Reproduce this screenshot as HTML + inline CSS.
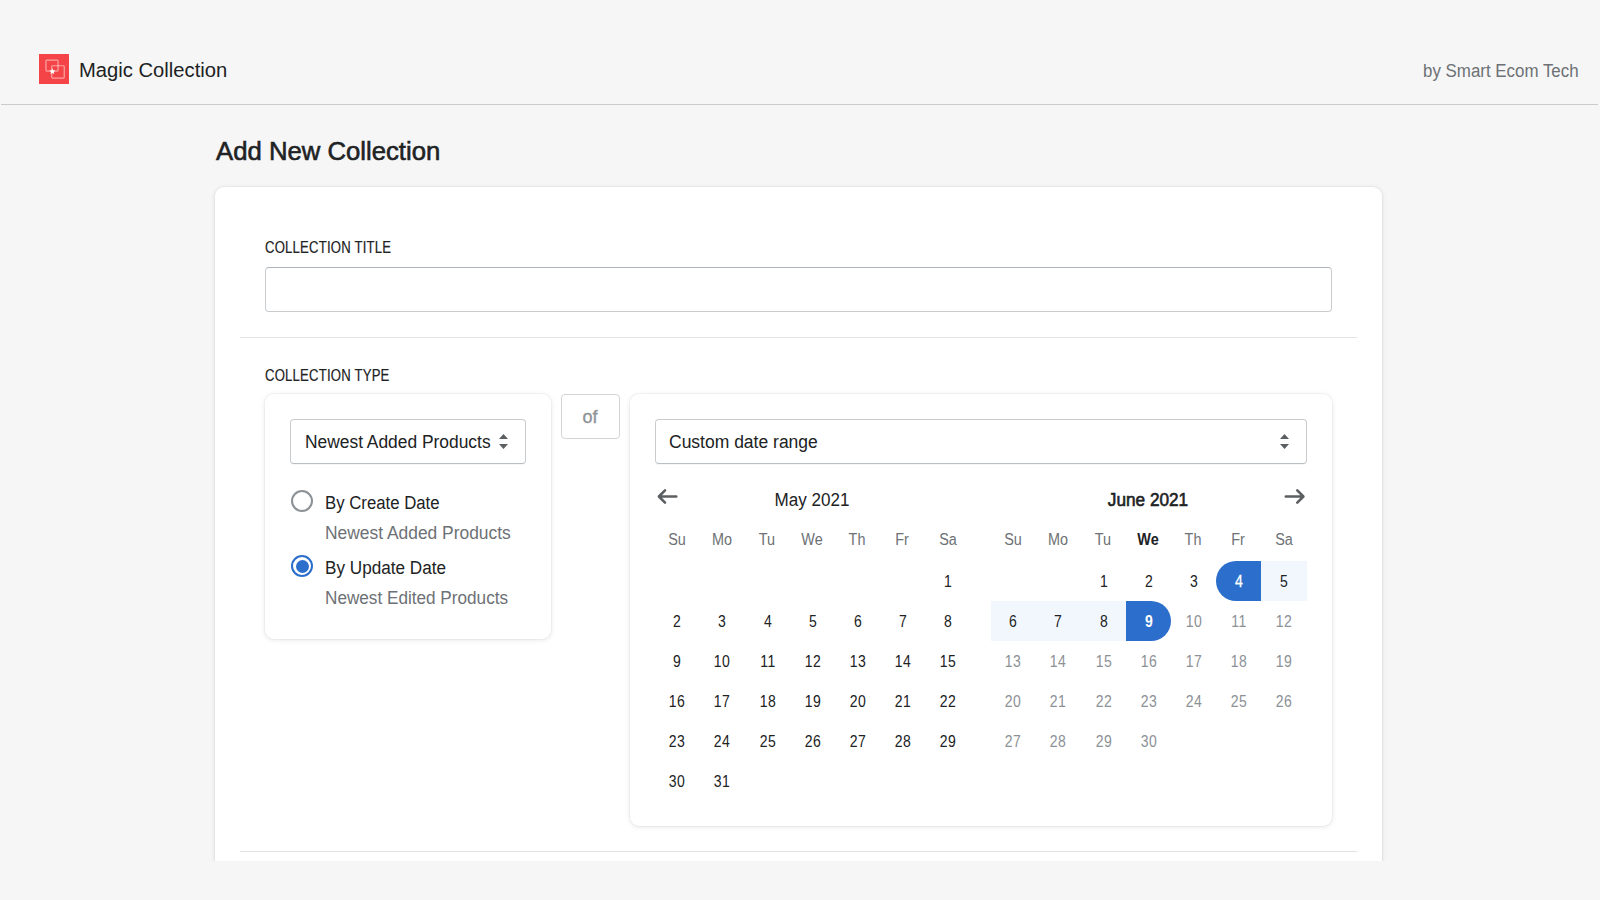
<!DOCTYPE html>
<html><head><meta charset="utf-8"><title>Magic Collection</title>
<style>
html,body{margin:0;padding:0;}
body{width:1600px;height:900px;background:#f6f6f7;position:relative;overflow:hidden;font-family:"Liberation Sans",sans-serif;}
.t{position:absolute;white-space:nowrap;}
.abs{position:absolute;}
.logo{position:absolute;left:39px;top:54px;width:30px;height:30px;background:#f54447;}
.logo svg{display:block}
.hline{position:absolute;left:1px;top:104px;width:1597px;height:1px;background:#c9cccf;}
.card{position:absolute;left:215px;top:187px;width:1167px;height:700px;background:#fff;border-radius:9px;
  box-shadow:0 0 0 1px rgba(63,63,68,.035),0 1px 5px 0 rgba(63,63,68,.13);}
.clip{position:absolute;left:0;top:861px;width:1600px;height:39px;background:#f6f6f7;}
.field{position:absolute;box-sizing:border-box;border:1px solid #c9cccf;border-top-color:#aeb4b9;border-radius:4px;background:#fff;}
.sel{position:absolute;box-sizing:border-box;border:1px solid #c9cccf;border-bottom-color:#babfc3;border-radius:4px;background:#fff;box-shadow:0 1px 0 rgba(22,29,37,.04);}
.divider{position:absolute;left:240px;width:1117px;height:1px;background:#e1e3e5;}
.sub{position:absolute;background:#fff;border-radius:9px;box-shadow:0 0 0 1px rgba(63,63,68,.035),0 1px 5px 0 rgba(63,63,68,.13);}
.ofbox{position:absolute;left:561px;top:394px;width:59px;height:45px;box-sizing:border-box;border:1px solid #d2d5d8;border-radius:4px;background:#fff;}
.radio{position:absolute;width:22px;height:22px;box-sizing:border-box;border:2px solid #8c9196;border-radius:50%;}
.radio.on{border-color:#2c6ecb;}
.radio.on span{position:absolute;left:2.5px;top:2.5px;width:13px;height:13px;border-radius:50%;background:#2c6ecb;}
</style></head><body>
<div class="logo"><svg width="30" height="30" viewBox="0 0 30 30"><rect x="6.95" y="6.05" width="12.1" height="11.1" rx="0.8" fill="none" stroke="rgba(255,255,255,0.5)" stroke-width="1.2"/><rect x="12.75" y="11.75" width="12.5" height="12.3" rx="0.8" fill="none" stroke="rgba(255,255,255,0.5)" stroke-width="1.2"/><path d="M13.4 14.4 L14.3 16.3 L16.4 16.5 L14.8 17.9 L15.3 20 L13.4 18.9 L11.5 20 L12 17.9 L10.4 16.5 L12.5 16.3 Z" fill="#fff"/></svg></div>
<div class="t" style="left:78.70px;top:59.77px;font-size:20px;line-height:20px;color:#202223;font-weight:normal;letter-spacing:0px;transform:scaleX(1.01);transform-origin:0 0;">Magic Collection</div>
<div class="t" style="left:1423.40px;top:61.66px;font-size:18px;line-height:18px;color:#6d7175;font-weight:normal;letter-spacing:0px;transform:scaleX(0.939);transform-origin:0 0;">by Smart Ecom Tech</div>
<div class="hline"></div>
<div class="t" style="left:215.50px;top:137.57px;font-size:26.5px;line-height:26.5px;color:#202223;font-weight:normal;letter-spacing:0px;transform:scaleX(0.97);transform-origin:0 0;-webkit-text-stroke:0.6px #202223;">Add New Collection</div>
<div class="card"></div>
<div class="t" style="left:264.60px;top:240.03px;font-size:15.8px;line-height:15.8px;color:#202223;font-weight:normal;letter-spacing:0.25px;transform:scaleX(0.83);transform-origin:0 0;-webkit-text-stroke:0.2px #202223;">COLLECTION TITLE</div>
<div class="field" style="left:265px;top:267px;width:1067px;height:45px"></div>
<div class="divider" style="top:337px"></div>
<div class="t" style="left:264.60px;top:367.63px;font-size:15.8px;line-height:15.8px;color:#202223;font-weight:normal;letter-spacing:0.25px;transform:scaleX(0.83);transform-origin:0 0;-webkit-text-stroke:0.2px #202223;">COLLECTION TYPE</div>
<div class="sub" style="left:265px;top:394px;width:286px;height:245px"></div>
<div class="sel" style="left:290px;top:419px;width:236px;height:45px"></div>
<div class="t" style="left:305.00px;top:432.56px;font-size:18px;line-height:18px;color:#202223;font-weight:normal;letter-spacing:0px;transform:scaleX(0.966);transform-origin:0 0;">Newest Added Products</div>
<svg class="abs" style="left:490px;top:430px" width="30" height="24" viewBox="490 430 30 24"><path d="M499 439 L503.5 434 L508 439 Z M499 444 L508 444 L503.5 449 Z" fill="#5c5f62"/></svg>
<div class="radio" style="left:291px;top:490px"></div>
<div class="radio on" style="left:291px;top:555px"><span></span></div>
<div class="t" style="left:325.00px;top:493.56px;font-size:18px;line-height:18px;color:#202223;font-weight:normal;letter-spacing:0px;transform:scaleX(0.931);transform-origin:0 0;">By Create Date</div>
<div class="t" style="left:325.00px;top:524.46px;font-size:18px;line-height:18px;color:#6d7175;font-weight:normal;letter-spacing:0px;transform:scaleX(0.967);transform-origin:0 0;">Newest Added Products</div>
<div class="t" style="left:325.00px;top:558.56px;font-size:18px;line-height:18px;color:#202223;font-weight:normal;letter-spacing:0px;transform:scaleX(0.952);transform-origin:0 0;">By Update Date</div>
<div class="t" style="left:325.00px;top:588.96px;font-size:18px;line-height:18px;color:#6d7175;font-weight:normal;letter-spacing:0px;transform:scaleX(0.953);transform-origin:0 0;">Newest Edited Products</div>
<div class="ofbox"></div>
<div class="t" style="left:582.50px;top:407.66px;font-size:18px;line-height:18px;color:#8c9196;font-weight:normal;letter-spacing:0px;-webkit-text-stroke:0.3px #8c9196;">of</div>
<div class="sub" style="left:630px;top:394px;width:702px;height:432px"></div>
<div class="sel" style="left:655px;top:419px;width:652px;height:45px"></div>
<div class="t" style="left:669.30px;top:433.06px;font-size:18px;line-height:18px;color:#202223;font-weight:normal;letter-spacing:0px;transform:scaleX(0.972);transform-origin:0 0;">Custom date range</div>
<svg class="abs" style="left:1270px;top:430px" width="30" height="24" viewBox="1270 430 30 24"><path d="M1280 439 L1284.5 434 L1289 439 Z M1280 444 L1289 444 L1284.5 449 Z" fill="#5c5f62"/></svg>
<svg class="abs" style="left:650px;top:482px" width="34" height="30" viewBox="650 482 34 30"><path d="M676.3 496.5 H659.5 M665 490.4 L658.9 496.5 L665 502.6" fill="none" stroke="#5c5f62" stroke-width="2.6" stroke-linecap="round" stroke-linejoin="round"/></svg>
<svg class="abs" style="left:1280px;top:482px" width="34" height="30" viewBox="1280 482 34 30"><path d="M1285.8 496.5 H1303 M1297.3 490.4 L1303.4 496.5 L1297.3 502.6" fill="none" stroke="#5c5f62" stroke-width="2.6" stroke-linecap="round" stroke-linejoin="round"/></svg>
<div class="t" style="left:712.30px;width:200px;text-align:center;top:490.66px;font-size:18px;line-height:18px;color:#202223;font-weight:normal;letter-spacing:0px;transform:scaleX(0.947);transform-origin:50% 0;">May 2021</div>
<div class="t" style="left:1048.20px;width:200px;text-align:center;top:490.66px;font-size:18px;line-height:18px;color:#202223;font-weight:normal;letter-spacing:0px;transform:scaleX(0.955);transform-origin:50% 0;-webkit-text-stroke:0.6px #202223;">June 2021</div>
<div class="t" style="left:576.77px;width:200px;text-align:center;top:531.66px;font-size:16px;line-height:16px;color:#6d7175;font-weight:normal;letter-spacing:0px;transform:scaleX(0.9);transform-origin:50% 0;">Su</div>
<div class="t" style="left:621.91px;width:200px;text-align:center;top:531.66px;font-size:16px;line-height:16px;color:#6d7175;font-weight:normal;letter-spacing:0px;transform:scaleX(0.9);transform-origin:50% 0;">Mo</div>
<div class="t" style="left:667.06px;width:200px;text-align:center;top:531.66px;font-size:16px;line-height:16px;color:#6d7175;font-weight:normal;letter-spacing:0px;transform:scaleX(0.9);transform-origin:50% 0;">Tu</div>
<div class="t" style="left:712.20px;width:200px;text-align:center;top:531.66px;font-size:16px;line-height:16px;color:#6d7175;font-weight:normal;letter-spacing:0px;transform:scaleX(0.9);transform-origin:50% 0;">We</div>
<div class="t" style="left:757.34px;width:200px;text-align:center;top:531.66px;font-size:16px;line-height:16px;color:#6d7175;font-weight:normal;letter-spacing:0px;transform:scaleX(0.9);transform-origin:50% 0;">Th</div>
<div class="t" style="left:802.49px;width:200px;text-align:center;top:531.66px;font-size:16px;line-height:16px;color:#6d7175;font-weight:normal;letter-spacing:0px;transform:scaleX(0.9);transform-origin:50% 0;">Fr</div>
<div class="t" style="left:847.63px;width:200px;text-align:center;top:531.66px;font-size:16px;line-height:16px;color:#6d7175;font-weight:normal;letter-spacing:0px;transform:scaleX(0.9);transform-origin:50% 0;">Sa</div>
<div class="t" style="left:912.77px;width:200px;text-align:center;top:531.66px;font-size:16px;line-height:16px;color:#6d7175;font-weight:normal;letter-spacing:0px;transform:scaleX(0.9);transform-origin:50% 0;">Su</div>
<div class="t" style="left:957.91px;width:200px;text-align:center;top:531.66px;font-size:16px;line-height:16px;color:#6d7175;font-weight:normal;letter-spacing:0px;transform:scaleX(0.9);transform-origin:50% 0;">Mo</div>
<div class="t" style="left:1003.06px;width:200px;text-align:center;top:531.66px;font-size:16px;line-height:16px;color:#6d7175;font-weight:normal;letter-spacing:0px;transform:scaleX(0.9);transform-origin:50% 0;">Tu</div>
<div class="t" style="left:1048.20px;width:200px;text-align:center;top:531.66px;font-size:16px;line-height:16px;color:#202223;font-weight:bold;letter-spacing:0px;transform:scaleX(0.9);transform-origin:50% 0;">We</div>
<div class="t" style="left:1093.34px;width:200px;text-align:center;top:531.66px;font-size:16px;line-height:16px;color:#6d7175;font-weight:normal;letter-spacing:0px;transform:scaleX(0.9);transform-origin:50% 0;">Th</div>
<div class="t" style="left:1138.49px;width:200px;text-align:center;top:531.66px;font-size:16px;line-height:16px;color:#6d7175;font-weight:normal;letter-spacing:0px;transform:scaleX(0.9);transform-origin:50% 0;">Fr</div>
<div class="t" style="left:1183.63px;width:200px;text-align:center;top:531.66px;font-size:16px;line-height:16px;color:#6d7175;font-weight:normal;letter-spacing:0px;transform:scaleX(0.9);transform-origin:50% 0;">Sa</div>
<div class="t" style="left:848.13px;width:200px;text-align:center;top:572.97px;font-size:16.1px;line-height:16.1px;color:#202223;font-weight:normal;letter-spacing:0.5px;transform:scaleX(0.87);transform-origin:50% 0;">1</div>
<div class="t" style="left:577.27px;width:200px;text-align:center;top:612.97px;font-size:16.1px;line-height:16.1px;color:#202223;font-weight:normal;letter-spacing:0.5px;transform:scaleX(0.87);transform-origin:50% 0;">2</div>
<div class="t" style="left:622.41px;width:200px;text-align:center;top:612.97px;font-size:16.1px;line-height:16.1px;color:#202223;font-weight:normal;letter-spacing:0.5px;transform:scaleX(0.87);transform-origin:50% 0;">3</div>
<div class="t" style="left:667.56px;width:200px;text-align:center;top:612.97px;font-size:16.1px;line-height:16.1px;color:#202223;font-weight:normal;letter-spacing:0.5px;transform:scaleX(0.87);transform-origin:50% 0;">4</div>
<div class="t" style="left:712.70px;width:200px;text-align:center;top:612.97px;font-size:16.1px;line-height:16.1px;color:#202223;font-weight:normal;letter-spacing:0.5px;transform:scaleX(0.87);transform-origin:50% 0;">5</div>
<div class="t" style="left:757.84px;width:200px;text-align:center;top:612.97px;font-size:16.1px;line-height:16.1px;color:#202223;font-weight:normal;letter-spacing:0.5px;transform:scaleX(0.87);transform-origin:50% 0;">6</div>
<div class="t" style="left:802.99px;width:200px;text-align:center;top:612.97px;font-size:16.1px;line-height:16.1px;color:#202223;font-weight:normal;letter-spacing:0.5px;transform:scaleX(0.87);transform-origin:50% 0;">7</div>
<div class="t" style="left:848.13px;width:200px;text-align:center;top:612.97px;font-size:16.1px;line-height:16.1px;color:#202223;font-weight:normal;letter-spacing:0.5px;transform:scaleX(0.87);transform-origin:50% 0;">8</div>
<div class="t" style="left:577.27px;width:200px;text-align:center;top:652.97px;font-size:16.1px;line-height:16.1px;color:#202223;font-weight:normal;letter-spacing:0.5px;transform:scaleX(0.87);transform-origin:50% 0;">9</div>
<div class="t" style="left:622.41px;width:200px;text-align:center;top:652.97px;font-size:16.1px;line-height:16.1px;color:#202223;font-weight:normal;letter-spacing:0.5px;transform:scaleX(0.87);transform-origin:50% 0;">10</div>
<div class="t" style="left:667.56px;width:200px;text-align:center;top:652.97px;font-size:16.1px;line-height:16.1px;color:#202223;font-weight:normal;letter-spacing:0.5px;transform:scaleX(0.87);transform-origin:50% 0;">11</div>
<div class="t" style="left:712.70px;width:200px;text-align:center;top:652.97px;font-size:16.1px;line-height:16.1px;color:#202223;font-weight:normal;letter-spacing:0.5px;transform:scaleX(0.87);transform-origin:50% 0;">12</div>
<div class="t" style="left:757.84px;width:200px;text-align:center;top:652.97px;font-size:16.1px;line-height:16.1px;color:#202223;font-weight:normal;letter-spacing:0.5px;transform:scaleX(0.87);transform-origin:50% 0;">13</div>
<div class="t" style="left:802.99px;width:200px;text-align:center;top:652.97px;font-size:16.1px;line-height:16.1px;color:#202223;font-weight:normal;letter-spacing:0.5px;transform:scaleX(0.87);transform-origin:50% 0;">14</div>
<div class="t" style="left:848.13px;width:200px;text-align:center;top:652.97px;font-size:16.1px;line-height:16.1px;color:#202223;font-weight:normal;letter-spacing:0.5px;transform:scaleX(0.87);transform-origin:50% 0;">15</div>
<div class="t" style="left:577.27px;width:200px;text-align:center;top:692.97px;font-size:16.1px;line-height:16.1px;color:#202223;font-weight:normal;letter-spacing:0.5px;transform:scaleX(0.87);transform-origin:50% 0;">16</div>
<div class="t" style="left:622.41px;width:200px;text-align:center;top:692.97px;font-size:16.1px;line-height:16.1px;color:#202223;font-weight:normal;letter-spacing:0.5px;transform:scaleX(0.87);transform-origin:50% 0;">17</div>
<div class="t" style="left:667.56px;width:200px;text-align:center;top:692.97px;font-size:16.1px;line-height:16.1px;color:#202223;font-weight:normal;letter-spacing:0.5px;transform:scaleX(0.87);transform-origin:50% 0;">18</div>
<div class="t" style="left:712.70px;width:200px;text-align:center;top:692.97px;font-size:16.1px;line-height:16.1px;color:#202223;font-weight:normal;letter-spacing:0.5px;transform:scaleX(0.87);transform-origin:50% 0;">19</div>
<div class="t" style="left:757.84px;width:200px;text-align:center;top:692.97px;font-size:16.1px;line-height:16.1px;color:#202223;font-weight:normal;letter-spacing:0.5px;transform:scaleX(0.87);transform-origin:50% 0;">20</div>
<div class="t" style="left:802.99px;width:200px;text-align:center;top:692.97px;font-size:16.1px;line-height:16.1px;color:#202223;font-weight:normal;letter-spacing:0.5px;transform:scaleX(0.87);transform-origin:50% 0;">21</div>
<div class="t" style="left:848.13px;width:200px;text-align:center;top:692.97px;font-size:16.1px;line-height:16.1px;color:#202223;font-weight:normal;letter-spacing:0.5px;transform:scaleX(0.87);transform-origin:50% 0;">22</div>
<div class="t" style="left:577.27px;width:200px;text-align:center;top:732.97px;font-size:16.1px;line-height:16.1px;color:#202223;font-weight:normal;letter-spacing:0.5px;transform:scaleX(0.87);transform-origin:50% 0;">23</div>
<div class="t" style="left:622.41px;width:200px;text-align:center;top:732.97px;font-size:16.1px;line-height:16.1px;color:#202223;font-weight:normal;letter-spacing:0.5px;transform:scaleX(0.87);transform-origin:50% 0;">24</div>
<div class="t" style="left:667.56px;width:200px;text-align:center;top:732.97px;font-size:16.1px;line-height:16.1px;color:#202223;font-weight:normal;letter-spacing:0.5px;transform:scaleX(0.87);transform-origin:50% 0;">25</div>
<div class="t" style="left:712.70px;width:200px;text-align:center;top:732.97px;font-size:16.1px;line-height:16.1px;color:#202223;font-weight:normal;letter-spacing:0.5px;transform:scaleX(0.87);transform-origin:50% 0;">26</div>
<div class="t" style="left:757.84px;width:200px;text-align:center;top:732.97px;font-size:16.1px;line-height:16.1px;color:#202223;font-weight:normal;letter-spacing:0.5px;transform:scaleX(0.87);transform-origin:50% 0;">27</div>
<div class="t" style="left:802.99px;width:200px;text-align:center;top:732.97px;font-size:16.1px;line-height:16.1px;color:#202223;font-weight:normal;letter-spacing:0.5px;transform:scaleX(0.87);transform-origin:50% 0;">28</div>
<div class="t" style="left:848.13px;width:200px;text-align:center;top:732.97px;font-size:16.1px;line-height:16.1px;color:#202223;font-weight:normal;letter-spacing:0.5px;transform:scaleX(0.87);transform-origin:50% 0;">29</div>
<div class="t" style="left:577.27px;width:200px;text-align:center;top:772.97px;font-size:16.1px;line-height:16.1px;color:#202223;font-weight:normal;letter-spacing:0.5px;transform:scaleX(0.87);transform-origin:50% 0;">30</div>
<div class="t" style="left:622.41px;width:200px;text-align:center;top:772.97px;font-size:16.1px;line-height:16.1px;color:#202223;font-weight:normal;letter-spacing:0.5px;transform:scaleX(0.87);transform-origin:50% 0;">31</div>
<div class="abs" style="left:1261px;top:561px;width:46px;height:40px;background:#f2f7fe"></div>
<div class="abs" style="left:991px;top:601px;width:135px;height:40px;background:#f2f7fe"></div>
<div class="abs" style="left:1216px;top:561px;width:45px;height:40px;background:#2c6ecb;border-radius:20px 0 0 20px"></div>
<div class="abs" style="left:1126px;top:601px;width:45px;height:40px;background:#2c6ecb;border-radius:0 20px 20px 0"></div>
<div class="t" style="left:1003.56px;width:200px;text-align:center;top:572.97px;font-size:16.1px;line-height:16.1px;color:#202223;font-weight:normal;letter-spacing:0.5px;transform:scaleX(0.87);transform-origin:50% 0;">1</div>
<div class="t" style="left:1048.70px;width:200px;text-align:center;top:572.97px;font-size:16.1px;line-height:16.1px;color:#202223;font-weight:normal;letter-spacing:0.5px;transform:scaleX(0.87);transform-origin:50% 0;">2</div>
<div class="t" style="left:1093.84px;width:200px;text-align:center;top:572.97px;font-size:16.1px;line-height:16.1px;color:#202223;font-weight:normal;letter-spacing:0.5px;transform:scaleX(0.87);transform-origin:50% 0;">3</div>
<div class="t" style="left:1138.99px;width:200px;text-align:center;top:572.97px;font-size:16.1px;line-height:16.1px;color:#ffffff;font-weight:normal;letter-spacing:0.5px;transform:scaleX(0.87);transform-origin:50% 0;-webkit-text-stroke:0.35px #fff;">4</div>
<div class="t" style="left:1184.13px;width:200px;text-align:center;top:572.97px;font-size:16.1px;line-height:16.1px;color:#202223;font-weight:normal;letter-spacing:0.5px;transform:scaleX(0.87);transform-origin:50% 0;">5</div>
<div class="t" style="left:913.27px;width:200px;text-align:center;top:612.97px;font-size:16.1px;line-height:16.1px;color:#202223;font-weight:normal;letter-spacing:0.5px;transform:scaleX(0.87);transform-origin:50% 0;">6</div>
<div class="t" style="left:958.41px;width:200px;text-align:center;top:612.97px;font-size:16.1px;line-height:16.1px;color:#202223;font-weight:normal;letter-spacing:0.5px;transform:scaleX(0.87);transform-origin:50% 0;">7</div>
<div class="t" style="left:1003.56px;width:200px;text-align:center;top:612.97px;font-size:16.1px;line-height:16.1px;color:#202223;font-weight:normal;letter-spacing:0.5px;transform:scaleX(0.87);transform-origin:50% 0;">8</div>
<div class="t" style="left:1048.70px;width:200px;text-align:center;top:612.97px;font-size:16.1px;line-height:16.1px;color:#ffffff;font-weight:bold;letter-spacing:0.5px;transform:scaleX(0.87);transform-origin:50% 0;">9</div>
<div class="t" style="left:1093.84px;width:200px;text-align:center;top:612.97px;font-size:16.1px;line-height:16.1px;color:#8c9196;font-weight:normal;letter-spacing:0.5px;transform:scaleX(0.87);transform-origin:50% 0;">10</div>
<div class="t" style="left:1138.99px;width:200px;text-align:center;top:612.97px;font-size:16.1px;line-height:16.1px;color:#8c9196;font-weight:normal;letter-spacing:0.5px;transform:scaleX(0.87);transform-origin:50% 0;">11</div>
<div class="t" style="left:1184.13px;width:200px;text-align:center;top:612.97px;font-size:16.1px;line-height:16.1px;color:#8c9196;font-weight:normal;letter-spacing:0.5px;transform:scaleX(0.87);transform-origin:50% 0;">12</div>
<div class="t" style="left:913.27px;width:200px;text-align:center;top:652.97px;font-size:16.1px;line-height:16.1px;color:#8c9196;font-weight:normal;letter-spacing:0.5px;transform:scaleX(0.87);transform-origin:50% 0;">13</div>
<div class="t" style="left:958.41px;width:200px;text-align:center;top:652.97px;font-size:16.1px;line-height:16.1px;color:#8c9196;font-weight:normal;letter-spacing:0.5px;transform:scaleX(0.87);transform-origin:50% 0;">14</div>
<div class="t" style="left:1003.56px;width:200px;text-align:center;top:652.97px;font-size:16.1px;line-height:16.1px;color:#8c9196;font-weight:normal;letter-spacing:0.5px;transform:scaleX(0.87);transform-origin:50% 0;">15</div>
<div class="t" style="left:1048.70px;width:200px;text-align:center;top:652.97px;font-size:16.1px;line-height:16.1px;color:#8c9196;font-weight:normal;letter-spacing:0.5px;transform:scaleX(0.87);transform-origin:50% 0;">16</div>
<div class="t" style="left:1093.84px;width:200px;text-align:center;top:652.97px;font-size:16.1px;line-height:16.1px;color:#8c9196;font-weight:normal;letter-spacing:0.5px;transform:scaleX(0.87);transform-origin:50% 0;">17</div>
<div class="t" style="left:1138.99px;width:200px;text-align:center;top:652.97px;font-size:16.1px;line-height:16.1px;color:#8c9196;font-weight:normal;letter-spacing:0.5px;transform:scaleX(0.87);transform-origin:50% 0;">18</div>
<div class="t" style="left:1184.13px;width:200px;text-align:center;top:652.97px;font-size:16.1px;line-height:16.1px;color:#8c9196;font-weight:normal;letter-spacing:0.5px;transform:scaleX(0.87);transform-origin:50% 0;">19</div>
<div class="t" style="left:913.27px;width:200px;text-align:center;top:692.97px;font-size:16.1px;line-height:16.1px;color:#8c9196;font-weight:normal;letter-spacing:0.5px;transform:scaleX(0.87);transform-origin:50% 0;">20</div>
<div class="t" style="left:958.41px;width:200px;text-align:center;top:692.97px;font-size:16.1px;line-height:16.1px;color:#8c9196;font-weight:normal;letter-spacing:0.5px;transform:scaleX(0.87);transform-origin:50% 0;">21</div>
<div class="t" style="left:1003.56px;width:200px;text-align:center;top:692.97px;font-size:16.1px;line-height:16.1px;color:#8c9196;font-weight:normal;letter-spacing:0.5px;transform:scaleX(0.87);transform-origin:50% 0;">22</div>
<div class="t" style="left:1048.70px;width:200px;text-align:center;top:692.97px;font-size:16.1px;line-height:16.1px;color:#8c9196;font-weight:normal;letter-spacing:0.5px;transform:scaleX(0.87);transform-origin:50% 0;">23</div>
<div class="t" style="left:1093.84px;width:200px;text-align:center;top:692.97px;font-size:16.1px;line-height:16.1px;color:#8c9196;font-weight:normal;letter-spacing:0.5px;transform:scaleX(0.87);transform-origin:50% 0;">24</div>
<div class="t" style="left:1138.99px;width:200px;text-align:center;top:692.97px;font-size:16.1px;line-height:16.1px;color:#8c9196;font-weight:normal;letter-spacing:0.5px;transform:scaleX(0.87);transform-origin:50% 0;">25</div>
<div class="t" style="left:1184.13px;width:200px;text-align:center;top:692.97px;font-size:16.1px;line-height:16.1px;color:#8c9196;font-weight:normal;letter-spacing:0.5px;transform:scaleX(0.87);transform-origin:50% 0;">26</div>
<div class="t" style="left:913.27px;width:200px;text-align:center;top:732.97px;font-size:16.1px;line-height:16.1px;color:#8c9196;font-weight:normal;letter-spacing:0.5px;transform:scaleX(0.87);transform-origin:50% 0;">27</div>
<div class="t" style="left:958.41px;width:200px;text-align:center;top:732.97px;font-size:16.1px;line-height:16.1px;color:#8c9196;font-weight:normal;letter-spacing:0.5px;transform:scaleX(0.87);transform-origin:50% 0;">28</div>
<div class="t" style="left:1003.56px;width:200px;text-align:center;top:732.97px;font-size:16.1px;line-height:16.1px;color:#8c9196;font-weight:normal;letter-spacing:0.5px;transform:scaleX(0.87);transform-origin:50% 0;">29</div>
<div class="t" style="left:1048.70px;width:200px;text-align:center;top:732.97px;font-size:16.1px;line-height:16.1px;color:#8c9196;font-weight:normal;letter-spacing:0.5px;transform:scaleX(0.87);transform-origin:50% 0;">30</div>
<div class="divider" style="top:851px"></div>
<div class="clip"></div>
</body></html>
